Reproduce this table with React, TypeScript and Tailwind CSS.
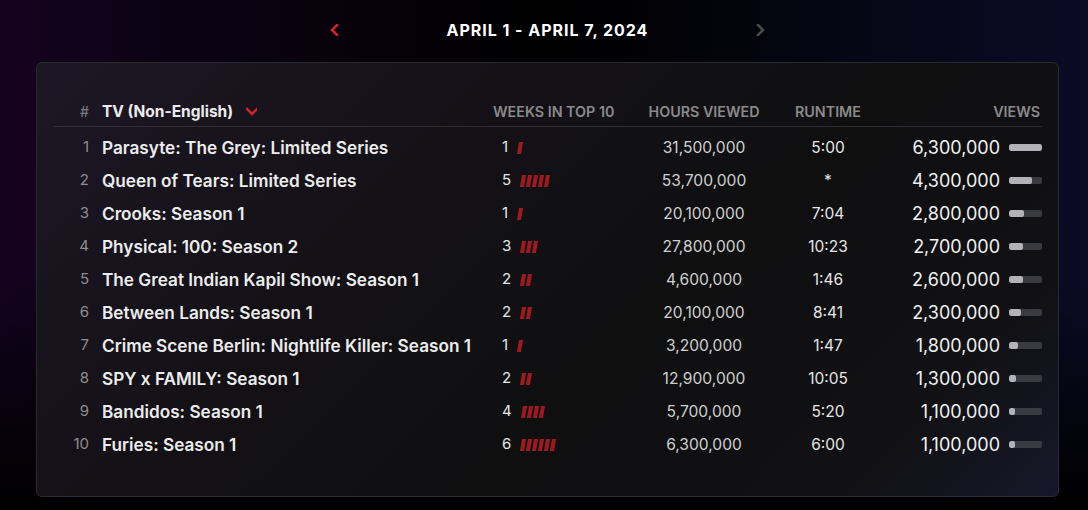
import React from "react";

const rows = [
  { t: "Parasyte: The Grey: Limited Series", w: 1, h: "31,500,000", r: "5:00", v: "6,300,000", n: 6.3 },
  { t: "Queen of Tears: Limited Series", w: 5, h: "53,700,000", r: "*", v: "4,300,000", n: 4.3 },
  { t: "Crooks: Season 1", w: 1, h: "20,100,000", r: "7:04", v: "2,800,000", n: 2.8 },
  { t: "Physical: 100: Season 2", w: 3, h: "27,800,000", r: "10:23", v: "2,700,000", n: 2.7 },
  { t: "The Great Indian Kapil Show: Season 1", w: 2, h: "4,600,000", r: "1:46", v: "2,600,000", n: 2.6 },
  { t: "Between Lands: Season 1", w: 2, h: "20,100,000", r: "8:41", v: "2,300,000", n: 2.3 },
  { t: "Crime Scene Berlin: Nightlife Killer: Season 1", w: 1, h: "3,200,000", r: "1:47", v: "1,800,000", n: 1.8 },
  { t: "SPY x FAMILY: Season 1", w: 2, h: "12,900,000", r: "10:05", v: "1,300,000", n: 1.3 },
  { t: "Bandidos: Season 1", w: 4, h: "5,700,000", r: "5:20", v: "1,100,000", n: 1.1 },
  { t: "Furies: Season 1", w: 6, h: "6,300,000", r: "6:00", v: "1,100,000", n: 1.1 },
];

function Chevron({ dir, color }: { dir: "left" | "right" | "down"; color: string }) {
  const d =
    dir === "left" ? "M8 1 L3 6 L8 11" : dir === "right" ? "M3 1 L8 6 L3 11" : "M1 3 L6 8 L11 3";
  return (
    <svg width="11" height="12" viewBox="0 0 11 12" fill="none">
      <path d={d} stroke={color} strokeWidth="2.6" strokeLinecap="square" strokeLinejoin="miter" />
    </svg>
  );
}

function Weeks({ n }: { n: number }) {
  return (
    <div className="flex gap-[2px] ml-[10px]">
      {Array.from({ length: n }).map((_, i) => (
        <div key={i} className="w-[4px] h-[12px] bg-[#9e1a1f] -skew-x-[10deg]" />
      ))}
    </div>
  );
}

export default function App() {
  return (
    <div
      className="w-[1088px] h-[510px] overflow-hidden bg-[linear-gradient(to_bottom,rgba(0,0,0,0)_55%,#000_100%),linear-gradient(to_right,#14031f_0%,#050108_35%,#000_50%,#03030a_65%,#0b0b26_100%)]"
      style={{ fontFamily: "Inter, 'Noto Sans', sans-serif" }}
    >
      <div className="pl-[36px] pr-[29px]">
        <div className="h-[62px] flex items-center justify-center gap-[107px] pb-[2px]">
          <Chevron dir="left" color="#d0222a" />
          <div className="text-[16px] font-bold tracking-[0.06em] text-white">APRIL 1 - APRIL 7, 2024</div>
          <Chevron dir="right" color="#4a4a4a" />
        </div>
        <div className="h-[435px] rounded-[6px] border border-[#2a2830] bg-[linear-gradient(135deg,#1d1725_0%,#131116_35%,#0f0f10_60%,#111115_85%,#17172a_100%)] px-[16px] pt-[34px]">
          <div className="flex items-center h-[30px] border-b border-[#2e2d31]">
            <div className="w-[36px] text-right text-[14px] text-[#7a7a7a] font-medium">#</div>
            <div className="w-[391px] ml-[13px] flex items-center gap-[13px]">
              <span className="text-[15.5px] font-bold text-[#ececec]">TV (Non-English)</span>
              <Chevron dir="down" color="#d0222a" />
            </div>
            <div className="w-[147px] text-[14.3px] font-semibold text-[#8a8a8a]">WEEKS IN TOP 10</div>
            <div className="w-[128px] text-center text-[14.3px] font-semibold text-[#8a8a8a]">HOURS VIEWED</div>
            <div className="w-[120px] text-center text-[14.3px] font-semibold text-[#8a8a8a]">RUNTIME</div>
            <div className="flex-1 text-right text-[14.3px] font-semibold text-[#8a8a8a] pr-[2px]">VIEWS</div>
          </div>
          <div className="pt-[4px]">
            {rows.map((row, i) => (
              <div key={i} className="flex items-center h-[33px]">
                <div className="w-[36px] text-right text-[15px] text-[#8e8e8e]">{i + 1}</div>
                <div className="w-[391px] ml-[13px] text-[17.2px] font-semibold text-[#ececec] whitespace-nowrap">
                  {row.t}
                </div>
                <div className="w-[147px] flex items-center pl-[9px]">
                  <span className="text-[15px] text-[#e6e6e6]">{row.w}</span>
                  <Weeks n={row.w} />
                </div>
                <div className="w-[128px] text-center text-[15.6px] text-[#cfcfcf]">{row.h}</div>
                <div className="w-[120px] text-center text-[15.5px] text-[#e6e6e6]">{row.r}</div>
                <div className="flex-1 flex items-center justify-end gap-[9px]">
                  <span className="text-[18px] text-[#f0f0f0]">{row.v}</span>
                  <div className="w-[33px] h-[7px] rounded-[2px] bg-[#3a3a42] overflow-hidden">
                    <div
                      className="h-full rounded-[2px] bg-[#b2b2b8]"
                      style={{ width: `${Math.max(4, Math.round((row.n / 6.3) * 33))}px` }}
                    />
                  </div>
                </div>
              </div>
            ))}
          </div>
        </div>
      </div>
    </div>
  );
}
